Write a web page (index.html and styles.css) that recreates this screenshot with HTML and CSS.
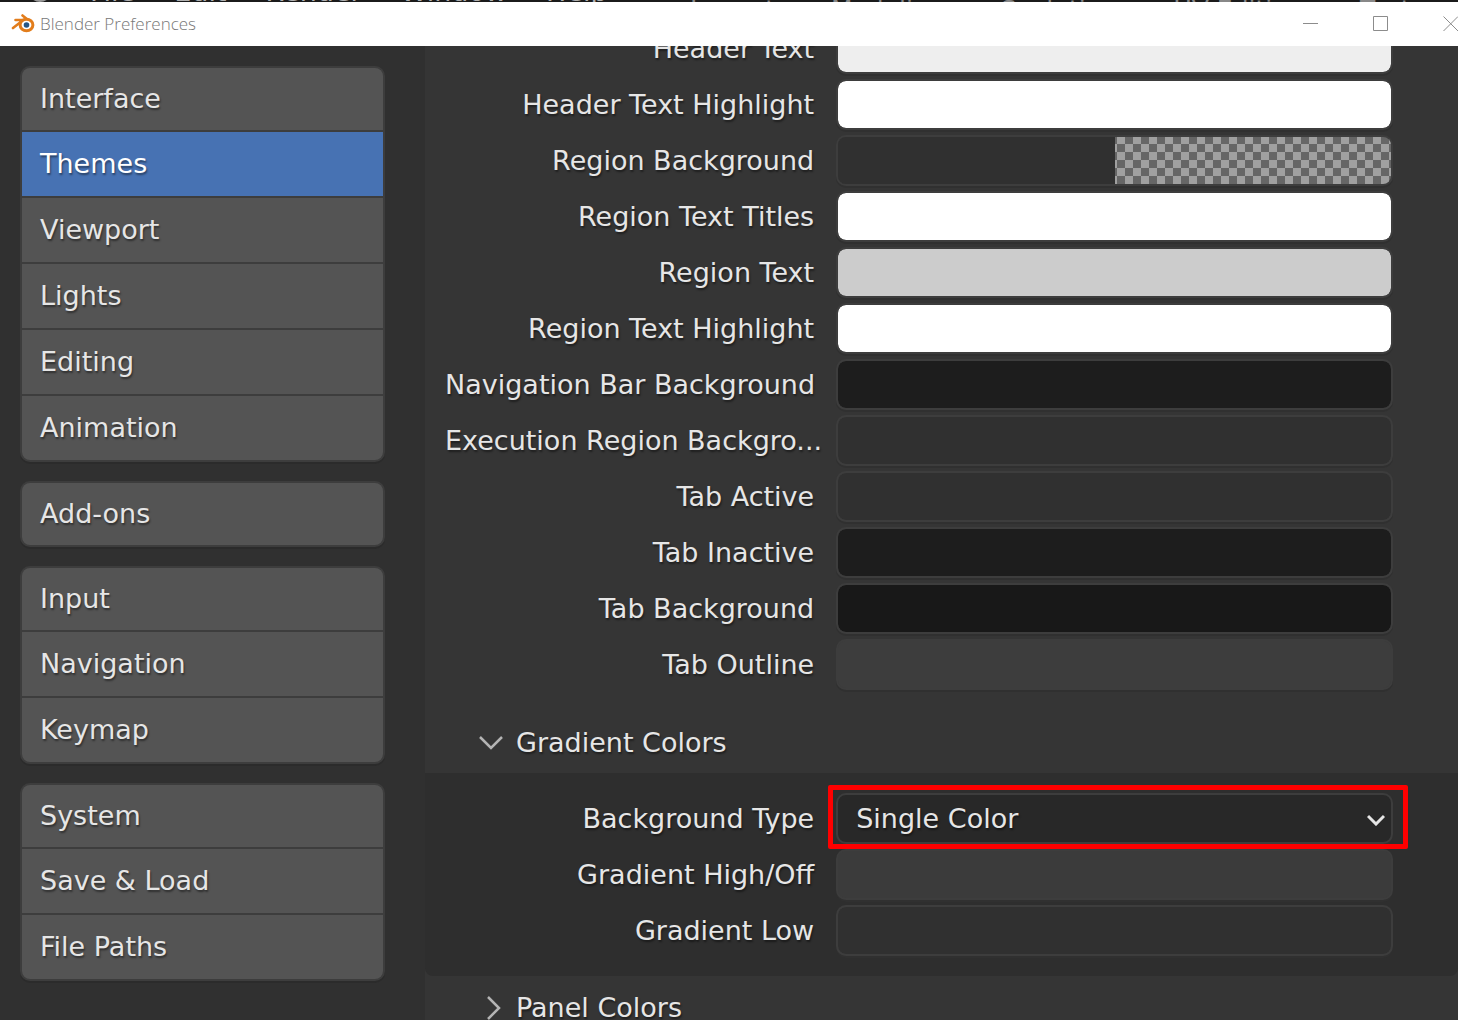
FILE: index.html
```html
<!DOCTYPE html>
<html lang="en">
<head>
<meta charset="utf-8">
<title>Blender Preferences</title>
<link rel="stylesheet" href="styles.css">
</head>
<body>
<div class="backdrop" aria-hidden="true">
  <div class="backdrop-menus"><span class="blob"></span><span>File</span><span>Edit</span><span>Render</span><span>Window</span><span>Help</span></div>
  <div class="backdrop-tabs"><span>Layout</span><span>Modeling</span><span>Sculpting</span><span>UV Editing</span><span>Texture Paint</span></div>
</div>
<header class="titlebar">
  <svg class="logo" viewBox="0 0 24 20" aria-hidden="true">
    <path fill="none" stroke="#e27d1c" stroke-width="2.6" stroke-linecap="round" stroke-linejoin="round" d="M4.500 6H12M11.500 1.500L19 7.500M2 14L11 7"/>
    <ellipse cx="15.500" cy="11" rx="6.400" ry="5.700" fill="#fff" stroke="#e27d1c" stroke-width="3"/>
    <circle cx="15.500" cy="11" r="2.800" fill="#265787"/>
  </svg>
  <h1 class="title">Blender Preferences</h1>
  <div class="window-controls">
    <button type="button" aria-label="Minimize"><svg viewBox="0 0 16 16"><path d="M0 7.500H15"/></svg></button>
    <button type="button" aria-label="Maximize"><svg viewBox="0 0 16 16"><path d="M.5 .5H14.500V14.500H.5Z"/></svg></button>
    <button type="button" aria-label="Close"><svg viewBox="0 0 16 16"><path d="M.5 .5L15 15M15 .5L.5 15"/></svg></button>
  </div>
</header>
<div class="window">
  <nav class="sidebar">
    <div class="group">
      <button type="button">Interface</button>
      <button type="button" class="active">Themes</button>
      <button type="button">Viewport</button>
      <button type="button">Lights</button>
      <button type="button">Editing</button>
      <button type="button">Animation</button>
    </div>
    <div class="group">
      <button type="button">Add-ons</button>
    </div>
    <div class="group">
      <button type="button">Input</button>
      <button type="button">Navigation</button>
      <button type="button">Keymap</button>
    </div>
    <div class="group">
      <button type="button">System</button>
      <button type="button">Save &amp; Load</button>
      <button type="button">File Paths</button>
    </div>
  </nav>
  <main class="content">
    <div class="rows theme-rows">
      <div class="row"><label for="c1">Header Text</label><input type="color" id="c1" value="#eeeeee"></div>
      <div class="row"><label for="c2">Header Text Highlight</label><input type="color" id="c2" value="#ffffff"></div>
      <div class="row"><label for="c3">Region Background</label><div class="alpha-field"><input type="color" id="c3" value="#303030"><span class="checker"></span></div></div>
      <div class="row"><label for="c4">Region Text Titles</label><input type="color" id="c4" value="#ffffff"></div>
      <div class="row"><label for="c5">Region Text</label><input type="color" id="c5" value="#cccccc"></div>
      <div class="row"><label for="c6">Region Text Highlight</label><input type="color" id="c6" value="#ffffff"></div>
      <div class="row"><label for="c7">Navigation Bar Background</label><input type="color" id="c7" value="#1d1d1d"></div>
      <div class="row"><label for="c8">Execution Region Backgro...</label><input type="color" id="c8" value="#303030"></div>
      <div class="row"><label for="c9">Tab Active</label><input type="color" id="c9" value="#303030"></div>
      <div class="row"><label for="c10">Tab Inactive</label><input type="color" id="c10" value="#1d1d1d"></div>
      <div class="row"><label for="c11">Tab Background</label><input type="color" id="c11" value="#181818"></div>
      <div class="row"><label for="c12">Tab Outline</label><input type="color" id="c12" value="#3d3d3d"></div>
    </div>
    <section>
      <button type="button" class="panel-header" aria-expanded="true">
        <svg viewBox="0 0 26 26"><path d="M2 7L13 18L24 7"/></svg>Gradient Colors
      </button>
      <div class="rows panel-body">
        <div class="row">
          <label for="bg">Background Type</label>
          <div class="select-field">
            <select id="bg"><option>Single Color</option><option>Linear Gradient</option><option>Vignette</option></select>
            <svg class="arrow" viewBox="0 0 18 12" aria-hidden="true"><path d="M1 2L9 10L17 2"/></svg>
            <span class="highlight"></span>
          </div>
        </div>
        <div class="row"><label for="g1">Gradient High/Off</label><input type="color" id="g1" value="#3b3b3b"></div>
        <div class="row"><label for="g2">Gradient Low</label><input type="color" id="g2" value="#303030"></div>
      </div>
    </section>
    <section>
      <button type="button" class="panel-header" aria-expanded="false">
        <svg viewBox="0 0 26 26"><path d="M10 2L21 13L10 24"/></svg>Panel Colors
      </button>
    </section>
  </main>
</div>
</body>
</html>
```

FILE: styles.css
```css
* {
  box-sizing: border-box;
}

body {
  margin: 0;
  height: 100vh;
  overflow: hidden;
  display: flex;
  flex-direction: column;
  background: #303030;
  color: #e6e6e6;
  font-family: "DejaVu Sans", sans-serif;
  font-size: 27px;
  line-height: 36px;
}

button,
select {
  font: inherit;
  color: inherit;
  text-shadow: inherit;
}

/* Sliver of the main window that shows above this one */
.backdrop {
  flex: none;
  display: flex;
  height: 2px;
  overflow: hidden;
  background: #1b1b1b;
  color: #b0b0b0;
}

.backdrop-menus {
  flex: none;
  display: flex;
  gap: 39px;
  width: 690px;
  padding-left: 28px;
  margin-top: -26px;
}

.blob {
  width: 24px;
  height: 28px;
  margin-right: -1px;
  border-radius: 0 0 12px 12px;
  background: #999;
}

.backdrop-tabs {
  flex: none;
  display: flex;
  gap: 56px;
  margin-top: -8px;
  font-size: 25px;
  white-space: nowrap;
  color: #888;
}

.titlebar {
  flex: none;
  display: flex;
  align-items: center;
  height: 44px;
  padding-left: 11px;
  background: #fff;
}

.logo {
  width: 24px;
  height: 20px;
}

.title {
  margin: 0 auto 0 5px;
  font: 300 17px/24px "Open Sans", sans-serif;
  color: #777;
}

.window-controls {
  flex: none;
  display: flex;
  gap: 54px;
  margin-right: -1px;
}

.window-controls button {
  display: flex;
  padding: 0;
  border: 0;
  background: none;
}

.window-controls svg {
  width: 16px;
  height: 16px;
  fill: none;
  stroke: #8c8c8c;
}

.window {
  flex: 1;
  min-height: 0;
  display: flex;
  text-shadow: 1px 2px 2px rgba(0, 0, 0, .45);
}

.sidebar {
  flex: none;
  width: 425px;
  padding: 20px 40px 0 20px;
  display: flex;
  flex-direction: column;
  gap: 19px;
}

.group {
  flex: none;
  display: flex;
  flex-direction: column;
  gap: 2px;
  border: 2px solid #3d3d3d;
  border-radius: 10px;
  overflow: hidden;
  background: #3d3d3d;
  box-shadow: 0 2px 0 #2b2b2b;
}

.group button {
  height: 64px;
  padding: 0 18px;
  border: 0;
  background: #545454;
  text-align: left;
}

.group button:first-child {
  height: 62px;
}

.group .active {
  background: #4772b3;
  color: #fff;
}

.content {
  flex: 1;
  min-width: 0;
  background: #353535;
  overflow: hidden;
}

.rows {
  display: flex;
  flex-direction: column;
  gap: 5px;
  padding: 0 65px 0 20px;
}

.theme-rows {
  margin-top: -23px;
  margin-bottom: 21px;
}

.row {
  display: grid;
  grid-template-columns: minmax(0, 2fr) minmax(0, 3fr);
  gap: 20px;
  align-items: center;
  height: 51px;
}

.row label {
  padding-right: 2px;
  text-align: right;
  white-space: nowrap;
}

input[type="color"],
.alpha-field,
select {
  appearance: none;
  width: 100%;
  height: 51px;
  padding: 0;
  border: 2px solid #3d3d3d;
  border-radius: 10px;
  background: #3d3d3d;
  box-shadow: 0 2px 0 #303030;
}

input::-webkit-color-swatch-wrapper {
  padding: 0;
}

input::-webkit-color-swatch {
  border: 0;
  border-radius: 8px;
}

.alpha-field {
  display: flex;
  overflow: hidden;
}

.alpha-field input[type="color"] {
  width: 50%;
  height: 100%;
  border: 0;
  border-radius: 0;
}

.alpha-field input::-webkit-color-swatch {
  border-radius: 0;
}

.checker {
  flex: 1;
  background: repeating-conic-gradient(#666 0 25%, #a0a0a0 0 50%) 2px -1px / 16px 16px;
}

.panel-header {
  display: flex;
  align-items: center;
  gap: 12px;
  width: 100%;
  height: 62px;
  padding: 2px 0 0 53px;
  border: 0;
  background: none;
}

.panel-header svg {
  width: 26px;
  height: 26px;
  fill: none;
  stroke: #b4b4b4;
  stroke-width: 2.500;
}

.panel-body {
  padding-top: 20px;
  padding-bottom: 20px;
  border-radius: 0 0 8px 8px;
  background: #2e2e2e;
}

.select-field {
  position: relative;
}

select {
  display: block;
  padding-left: 18px;
  background: #282828;
}

.arrow {
  position: absolute;
  right: 8px;
  top: 21px;
  width: 18px;
  height: 12px;
  fill: none;
  stroke: #e6e6e6;
  stroke-width: 3;
}

/* Callout frame round the drop-down */
.highlight {
  position: absolute;
  inset: -8px -15px -5px -8px;
  border: 5px solid #f00;
  border-radius: 2px;
  pointer-events: none;
}
```
